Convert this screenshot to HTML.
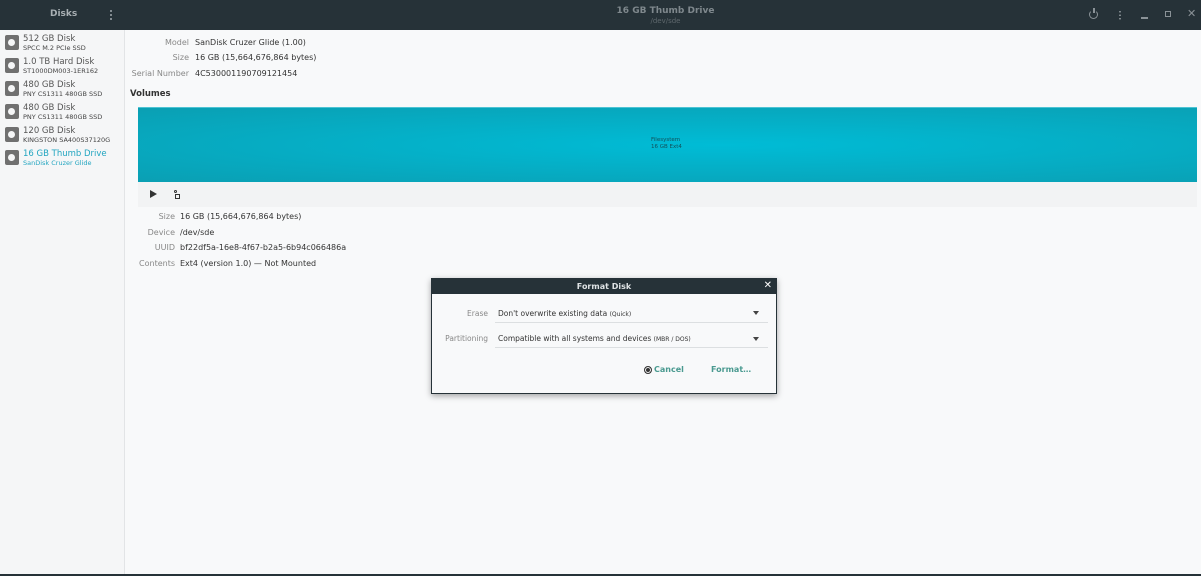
<!DOCTYPE html>
<html><head><meta charset="utf-8"><style>
*{margin:0;padding:0;box-sizing:border-box}
body{width:1201px;height:576px;overflow:hidden;background:#f8f9fa;font-family:"DejaVu Sans","Liberation Sans",sans-serif;position:relative;color:#333}
.hdr{position:absolute;left:0;top:0;width:1201px;height:30px;background:#263238}
.abs{position:absolute;white-space:nowrap}
.side{position:absolute;left:0;top:30px;width:125px;height:544px;background:#f5f6f7;border-right:1px solid #e2e4e6}
.item{position:absolute;left:5px;width:120px}
.ic{position:absolute;left:0;top:2px;width:14px;height:15px;background:#707070;border-radius:2px}
.ic:after{content:"";position:absolute;left:3px;top:4px;width:7px;height:7px;border-radius:50%;background:#f5f6f7}
.t1{position:absolute;left:18px;top:1px;font-size:8.5px;color:#555}
.t2{position:absolute;left:18px;top:11px;font-size:6.5px;color:#444}
.lbl{font-size:8px;color:#888;text-align:right;width:60px}
.val{font-size:8px;color:#333}
</style></head><body>
<div class="hdr"></div>
<div class="abs" style="left:50px;top:9px;font-size:9px;color:#a9b0b4;font-weight:bold">Disks</div>
<div class="abs" style="left:110px;top:9px;width:2px;height:11px;background:radial-gradient(circle,#8a9297 1px,transparent 1.2px) 0 0/2px 4px"></div>
<div class="abs" style="left:0;width:1331px;top:6px;text-align:center;font-size:9px;color:#7f888d;font-weight:bold">16 GB Thumb Drive</div>
<div class="abs" style="left:0;width:1331px;top:17px;text-align:center;font-size:7px;color:#5f686d">/dev/sde</div>
<div class="abs" style="left:1089px;top:10px;width:9px;height:9px;border:1.5px solid #8a9297;border-radius:50%;border-top-color:transparent"></div>
<div class="abs" style="left:1093px;top:8px;width:1.5px;height:5px;background:#8a9297"></div>
<div class="abs" style="left:1119px;top:10px;width:2px;height:10px;background:radial-gradient(circle,#8a9297 .8px,transparent 1px) 0 0/2px 3.5px"></div>
<div class="abs" style="left:1141px;top:17px;width:7px;height:1.5px;background:#8a9297"></div>
<div class="abs" style="left:1165px;top:11px;width:6px;height:6px;border:1.5px solid #8a9297"></div>
<div class="abs" style="left:1187px;top:7px;font-size:11px;color:#8a9297;font-weight:bold">✕</div>

<div class="side">
<div class="item" style="top:3px"><div class="ic"></div><div class="t1">512 GB Disk</div><div class="t2">SPCC M.2 PCIe SSD</div></div>
<div class="item" style="top:26px"><div class="ic"></div><div class="t1">1.0 TB Hard Disk</div><div class="t2">ST1000DM003-1ER162</div></div>
<div class="item" style="top:49px"><div class="ic"></div><div class="t1">480 GB Disk</div><div class="t2">PNY CS1311 480GB SSD</div></div>
<div class="item" style="top:72px"><div class="ic"></div><div class="t1">480 GB Disk</div><div class="t2">PNY CS1311 480GB SSD</div></div>
<div class="item" style="top:95px"><div class="ic"></div><div class="t1">120 GB Disk</div><div class="t2">KINGSTON SA400S37120G</div></div>
<div class="item" style="top:118px"><div class="ic"></div><div class="t1" style="color:#22a5c0">16 GB Thumb Drive</div><div class="t2" style="color:#22a5c0">SanDisk Cruzer Glide</div></div>
</div>

<div class="abs lbl" style="left:129px;top:38px">Model</div><div class="abs val" style="left:195px;top:38px">SanDisk Cruzer Glide (1.00)</div>
<div class="abs lbl" style="left:129px;top:53px">Size</div><div class="abs val" style="left:195px;top:53px">16 GB (15,664,676,864 bytes)</div>
<div class="abs lbl" style="left:129px;top:69px">Serial Number</div><div class="abs val" style="left:195px;top:69px">4C530001190709121454</div>
<div class="abs" style="left:130px;top:89px;font-size:8.5px;font-weight:bold;color:#333">Volumes</div>

<div class="abs" style="left:138px;top:107px;width:1059px;height:75px;background:radial-gradient(ellipse at 55% 50%,#00bcd6 0%,#06acc3 55%,#0a9fb3 100%);border-top:1px solid #4dc3d3"></div>
<div class="abs" style="left:651px;top:137px;font-size:5.5px;color:#12505a;line-height:7px">Filesystem<br>16 GB Ext4</div>
<div class="abs" style="left:138px;top:182px;width:1059px;height:25px;background:#f2f3f4"></div>
<div class="abs" style="left:150px;top:190px;width:0;height:0;border-left:7px solid #333;border-top:4px solid transparent;border-bottom:4px solid transparent"></div>
<div class="abs" style="left:174px;top:190px;width:3px;height:3px;border:1px solid #333;border-radius:50%"></div>
<div class="abs" style="left:175px;top:194px;width:5px;height:5px;border:1.3px solid #333"></div>

<div class="abs lbl" style="left:115px;top:212px">Size</div><div class="abs val" style="left:180px;top:212px">16 GB (15,664,676,864 bytes)</div>
<div class="abs lbl" style="left:115px;top:228px">Device</div><div class="abs val" style="left:180px;top:228px">/dev/sde</div>
<div class="abs lbl" style="left:115px;top:243px">UUID</div><div class="abs val" style="left:180px;top:243px">bf22df5a-16e8-4f67-b2a5-6b94c066486a</div>
<div class="abs lbl" style="left:115px;top:259px">Contents</div><div class="abs val" style="left:180px;top:259px">Ext4 (version 1.0) — Not Mounted</div>

<div class="abs" style="left:431px;top:278px;width:346px;height:116px;background:#f8f9fa;border:1px solid #263238;box-shadow:0 2px 6px rgba(0,0,0,.35)">
<div style="height:15px;background:#263238;color:#dfe3e5;font-size:8px;font-weight:bold;text-align:center;line-height:15px">Format Disk</div>
<div class="abs" style="right:4px;top:1px;color:#fff;font-size:10px;font-weight:bold">✕</div>
<div class="abs" style="left:0;width:56px;top:30px;text-align:right;font-size:7.5px;color:#888">Erase</div>
<div class="abs" style="left:66px;top:30px;font-size:7.5px;color:#333">Don't overwrite existing data <span style="font-size:6px">(Quick)</span></div>
<div class="abs" style="left:63px;top:43px;width:273px;height:1px;background:#dcdfe1"></div>
<div class="abs" style="left:321px;top:32px;border-top:4px solid #444;border-left:3.5px solid transparent;border-right:3.5px solid transparent"></div>
<div class="abs" style="left:0;width:56px;top:55px;text-align:right;font-size:7.5px;color:#888">Partitioning</div>
<div class="abs" style="left:66px;top:55px;font-size:7.5px;color:#333">Compatible with all systems and devices <span style="font-size:6px">(MBR / DOS)</span></div>
<div class="abs" style="left:63px;top:68px;width:273px;height:1px;background:#dcdfe1"></div>
<div class="abs" style="left:321px;top:58px;border-top:4px solid #444;border-left:3.5px solid transparent;border-right:3.5px solid transparent"></div>
<div class="abs" style="left:212px;top:87px;width:8px;height:8px;border-radius:50%;background:#333;border:1.5px solid #333;box-shadow:inset 0 0 0 1px #fff"></div>
<div class="abs" style="left:222px;top:86px;font-size:8px;color:#4a9a90;font-weight:bold">Cancel</div>
<div class="abs" style="left:279px;top:86px;font-size:8px;color:#4a9a90;font-weight:bold">Format…</div>
</div>
<div class="abs" style="left:0;top:574px;width:1201px;height:2px;background:#263238"></div>
</body></html>
